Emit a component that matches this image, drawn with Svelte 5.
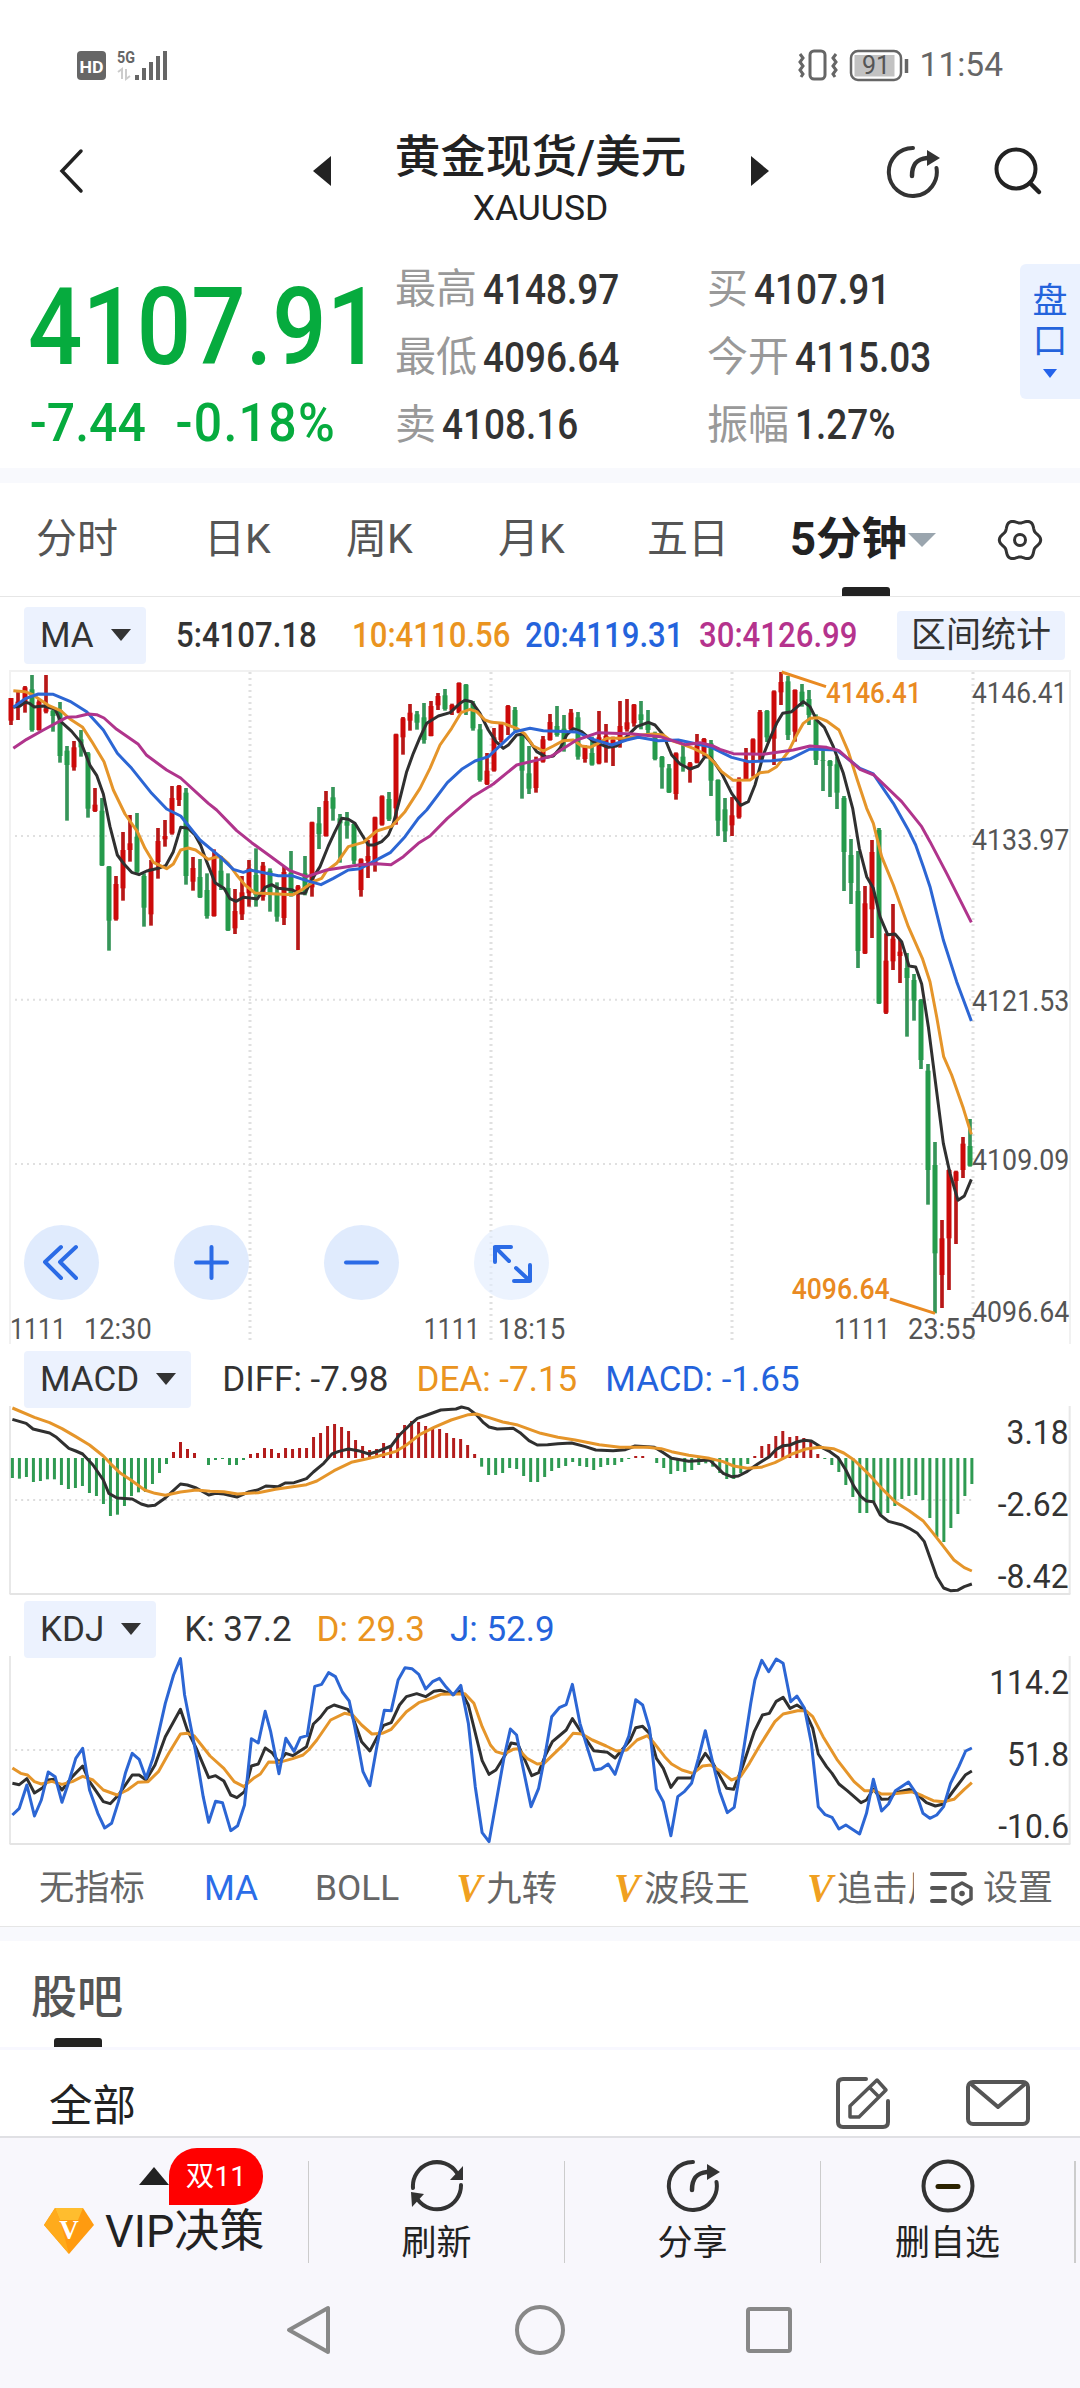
<script lang="ts">
    const stats = [
        ['最高', '4148.97'],
        ['买', '4107.91'],
        ['最低', '4096.64'],
        ['今开', '4115.03'],
        ['卖', '4108.16'],
        ['振幅', '1.27%'],
    ];

    const periods = ['分时', '日K', '周K', '月K', '五日'];

    const averages = [
        { text: '5:4107.18', color: 'dark' },
        { text: '10:4110.56', color: 'orange' },
        { text: '20:4119.31', color: 'blue' },
        { text: '30:4126.99', color: 'purple' },
    ];

    // six-lobed outline of the gear icon
    const gear = Array.from({ length: 72 }, (_, i) => {
        const a = (i * Math.PI) / 36;
        const r = 18.8 + 1.9 * Math.cos(6 * a);
        return `${(23 + r * Math.cos(a)).toFixed(2)},${(22 + r * Math.sin(a)).toFixed(2)}`;
    }).join(' ');

    // direction (1 = up), high, body top, body bottom, low; three units per pixel
    const candles = [
        [1, 114, 114, 182, 195], [1, 92, 125, 140, 180], [1, 78, 82, 128, 158], [0, 45, 88, 210, 215],
        [1, 118, 125, 210, 212], [1, 45, 145, 155, 160], [0, 150, 152, 168, 215], [0, 126, 150, 288, 308],
        [0, 258, 272, 315, 482], [1, 243, 262, 322, 332], [0, 210, 238, 262, 290], [0, 276, 280, 446, 473],
        [1, 384, 434, 453, 456], [0, 414, 452, 616, 618], [0, 618, 620, 782, 872], [1, 648, 672, 778, 782],
        [1, 516, 570, 685, 722], [1, 465, 550, 570, 605], [0, 459, 530, 635, 640], [0, 640, 648, 743, 800],
        [1, 600, 625, 763, 797], [1, 504, 543, 606, 656], [1, 480, 528, 538, 560], [1, 378, 414, 520, 524],
        [1, 375, 378, 420, 438], [0, 384, 398, 648, 674], [1, 591, 624, 665, 692], [0, 597, 651, 712, 714],
        [0, 640, 690, 768, 776], [1, 568, 590, 768, 770], [0, 588, 632, 680, 690], [0, 640, 684, 811, 813],
        [1, 687, 753, 805, 822], [1, 648, 697, 763, 780], [1, 600, 625, 700, 740], [0, 565, 645, 705, 740],
        [1, 606, 617, 710, 722], [0, 625, 632, 705, 755], [0, 667, 698, 770, 785], [1, 620, 636, 774, 795],
        [0, 573, 638, 700, 710], [1, 675, 679, 692, 870], [0, 588, 640, 700, 706], [1, 485, 487, 682, 710],
        [0, 441, 490, 522, 567], [1, 393, 423, 528, 530], [0, 381, 412, 446, 482], [0, 462, 475, 490, 608],
        [0, 456, 485, 497, 536], [0, 490, 492, 602, 612], [1, 595, 598, 690, 710], [1, 540, 588, 603, 654],
        [1, 470, 472, 615, 635], [1, 406, 409, 494, 497], [0, 396, 417, 478, 483], [1, 221, 223, 445, 494],
        [1, 171, 175, 232, 284], [1, 132, 158, 182, 212], [0, 153, 163, 188, 209], [0, 129, 172, 240, 251],
        [1, 123, 138, 228, 229], [1, 99, 108, 136, 150], [0, 87, 106, 147, 152], [1, 131, 135, 152, 165],
        [1, 67, 69, 158, 160], [0, 72, 74, 150, 165], [0, 123, 130, 205, 212], [0, 192, 208, 360, 365],
        [1, 279, 332, 372, 375], [1, 204, 232, 332, 335], [1, 186, 192, 240, 248], [1, 135, 138, 200, 225],
        [0, 141, 150, 200, 212], [0, 220, 225, 332, 416], [0, 258, 340, 386, 402], [1, 290, 300, 384, 398],
        [1, 228, 238, 305, 308], [1, 162, 186, 240, 242], [0, 138, 198, 225, 230], [0, 165, 206, 245, 275],
        [1, 147, 158, 208, 215], [0, 156, 172, 290, 299], [1, 255, 260, 297, 308], [0, 230, 279, 314, 317],
        [1, 153, 232, 310, 313], [1, 192, 228, 262, 308], [1, 230, 240, 258, 318], [1, 123, 198, 240, 263],
        [1, 117, 187, 208, 215], [1, 132, 134, 190, 200], [0, 123, 163, 180, 208], [0, 150, 185, 210, 225],
        [0, 215, 222, 297, 301], [0, 288, 291, 322, 386], [0, 312, 325, 397, 399], [1, 277, 280, 402, 419],
        [0, 250, 290, 318, 335], [1, 306, 310, 330, 368], [1, 222, 256, 308, 310], [1, 234, 237, 280, 290],
        [0, 240, 250, 362, 408], [0, 358, 360, 482, 528], [0, 414, 448, 514, 546], [1, 411, 466, 496, 528],
        [1, 352, 365, 472, 476], [1, 264, 300, 358, 362], [1, 235, 238, 285, 350], [1, 150, 156, 280, 300],
        [0, 150, 153, 232, 246], [1, 91, 94, 236, 315], [1, 36, 66, 97, 135], [0, 48, 64, 225, 240],
        [1, 88, 90, 215, 245], [0, 72, 95, 125, 140], [0, 90, 117, 165, 195], [0, 163, 180, 300, 315],
        [0, 273, 300, 302, 393], [0, 300, 303, 318, 411], [0, 290, 313, 398, 447], [0, 408, 414, 576, 693],
        [0, 537, 585, 669, 732], [0, 573, 693, 873, 924], [1, 678, 730, 880, 882], [1, 540, 576, 748, 834],
        [0, 504, 510, 1030, 1032], [1, 820, 902, 1058, 1062], [1, 732, 836, 904, 930], [1, 840, 875, 888, 969],
        [0, 879, 924, 954, 1130], [0, 942, 960, 1022, 1082], [0, 1017, 1020, 1200, 1227], [0, 1212, 1232, 1530, 1634],
        [0, 1446, 1515, 1780, 1960], [1, 1680, 1735, 1845, 1944], [1, 1528, 1530, 1735, 1890], [1, 1532, 1535, 1563, 1752],
        [1, 1431, 1451, 1530, 1554], [0, 1377, 1458, 1517, 1520],
    ];

    const ma5 =
        '40,142 60,138 75,127 88,130 103,141 130,138 165,147 182,184 215,214 243,248 270,316 290,346 310,402 330,500 352,585 372,612 395,637 417,644 440,633 475,625 498,616 520,575 542,502 565,505 585,525 602,556 620,605 645,668 672,685 690,716 708,724 730,712 772,717 795,682 815,674 835,685 875,689 895,699 915,700 938,655 960,620 985,558 1005,515 1025,475 1045,478 1065,490 1083,520 1105,555 1122,555 1145,545 1165,525 1180,490 1200,415 1220,335 1240,280 1260,232 1280,190 1315,168 1350,158 1380,130 1395,121 1415,125 1440,160 1465,210 1488,245 1510,265 1525,255 1550,225 1570,222 1590,245 1610,275 1640,292 1660,288 1680,265 1700,225 1720,206 1745,215 1780,245 1825,262 1850,258 1880,230 1910,200 1945,187 1965,195 1990,225 2015,285 2040,312 2070,327 2095,318 2115,290 2130,292 2145,310 2165,340 2195,400 2222,436 2245,425 2265,375 2290,285 2310,235 2330,190 2348,160 2375,155 2410,125 2430,140 2450,180 2473,202 2500,260 2530,340 2558,445 2578,565 2600,650 2620,685 2640,770 2663,824 2685,822 2705,845 2727,918 2747,921 2765,972 2785,1100 2810,1295 2830,1450 2850,1540 2874,1621 2893,1608 2914,1558';
    const ma10 =
        '40,92 75,95 98,104 145,136 182,152 210,177 248,202 275,244 312,305 340,390 375,462 412,515 435,565 460,607 500,626 520,612 542,570 565,564 587,570 625,598 645,592 662,590 685,610 710,645 735,675 765,699 880,704 905,690 940,665 965,655 980,632 1010,610 1045,560 1090,547 1130,513 1175,499 1215,455 1260,385 1290,325 1320,255 1355,205 1383,158 1410,148 1430,155 1455,180 1475,187 1510,190 1550,205 1575,222 1600,258 1630,273 1660,258 1690,242 1720,240 1745,258 1770,262 1795,250 1820,235 1880,235 1925,225 1960,222 1990,225 2010,240 2040,250 2080,265 2120,285 2145,310 2165,335 2200,361 2250,360 2280,338 2305,335 2330,320 2365,275 2390,225 2410,190 2430,175 2455,173 2480,183 2517,210 2545,275 2572,360 2600,445 2620,490 2645,590 2680,675 2725,800 2767,895 2790,965 2810,1070 2831,1190 2855,1245 2890,1345 2914,1423';
    const ma20 =
        '40,142 78,115 115,102 160,103 210,124 260,155 310,210 352,280 395,325 455,400 500,447 542,468 600,540 660,590 700,628 730,637 750,630 835,647 875,647 920,662 963,674 1000,655 1045,630 1080,626 1120,605 1172,577 1215,530 1255,475 1280,450 1342,368 1385,328 1425,303 1465,290 1510,248 1545,215 1590,205 1630,212 1730,216 1780,238 1835,255 1880,240 1915,232 1975,242 2035,240 2080,250 2130,260 2160,275 2195,292 2245,305 2315,302 2372,296 2430,267 2510,270 2580,325 2620,342 2680,430 2725,510 2747,555 2770,620 2790,680 2830,840 2870,965 2914,1083';
    const ma30 =
        '40,265 80,238 130,210 200,172 230,170 265,162 290,164 312,174 350,208 415,253 440,286 500,330 542,354 625,430 650,450 710,512 755,548 810,588 870,632 920,650 980,630 1080,614 1130,611 1173,614 1210,590 1255,550 1290,528 1342,475 1415,412 1480,372 1550,315 1620,298 1655,288 1730,240 1795,218 1900,222 1980,230 2055,254 2100,248 2140,258 2160,268 2200,281 2290,283 2380,270 2430,258 2480,262 2517,272 2580,328 2622,345 2705,425 2765,500 2790,545 2840,640 2914,787';

    const zero = 324;
    const step = 10.168;
    const bars = [
        384, 386, 381, 396, 393, 388, 388, 405, 417, 414, 408, 429, 438, 462, 498, 494, 468, 438, 427, 426, 402, 369, 342,
        306, 276, 297, 309, 324, 345, 330, 327, 345, 345, 330, 312, 309, 294, 297, 309, 294, 297, 294, 294, 261, 249, 228,
        222, 231, 243, 270, 288, 300, 297, 279, 285, 249, 225, 213, 216, 228, 231, 237, 249, 264, 267, 285, 312, 350, 375,
        375, 369, 354, 357, 378, 396, 396, 381, 363, 354, 348, 336, 348, 351, 360, 351, 345, 345, 336, 327, 318, 318, 324,
        339, 354, 372, 363, 366, 360, 345, 340, 350, 369, 387, 387, 369, 342, 318, 288, 282, 258, 243, 261, 258, 264, 276,
        312, 327, 345, 366, 405, 441, 489, 489, 456, 494, 489, 468, 447, 438, 435, 450, 504, 561, 576, 534, 492, 438, 402,
    ];

    const diff =
        '18,208 28,214 38,220 48,237 60,243 72,249 82,262 100,295 110,303 120,312 135,345 150,390 158,430 170,444 192,447 205,462 215,468 225,466 240,444 250,425 262,402 272,405 285,414 303,435 313,430 325,432 344,441 362,425 374,420 386,408 404,410 414,399 427,398 445,386 455,366 470,340 482,312 492,304 506,297 520,302 536,312 550,303 568,288 580,255 595,225 606,205 620,195 640,180 662,177 670,171 680,176 692,195 702,218 710,231 722,237 745,235 755,248 768,272 780,285 795,284 810,281 830,279 850,290 865,300 890,302 908,299 922,288 940,290 950,292 962,307 975,325 1000,334 1030,330 1038,345 1050,370 1062,380 1072,378 1085,364 1100,342 1117,320 1127,298 1137,287 1147,285 1157,276 1168,271 1178,273 1190,289 1205,305 1217,323 1228,360 1240,410 1250,440 1258,453 1268,455 1278,495 1290,514 1310,525 1320,535 1332,550 1342,575 1350,622 1360,680 1370,714 1380,722 1390,721 1400,710 1411,702';
    const dea =
        '18,174 50,202 72,218 90,236 110,260 130,285 150,318 160,340 175,370 190,390 210,420 225,430 240,436 262,426 285,420 305,424 325,425 345,432 375,428 400,418 425,410 445,404 460,393 485,362 510,337 530,328 550,318 575,304 590,285 610,253 630,232 655,210 680,194 692,192 710,203 730,216 750,224 785,250 810,262 835,270 870,284 900,292 940,292 960,296 975,305 1000,316 1030,325 1050,335 1065,348 1085,355 1105,352 1125,338 1150,312 1170,297 1190,292 1210,296 1225,309 1240,330 1260,370 1280,415 1300,456 1320,482 1340,512 1355,550 1370,590 1385,630 1400,653 1411,663';

    const kLine =
        '18,550 28,554 39,536 50,579 62,563 70,540 78,538 90,570 105,530 120,498 130,545 150,605 160,611 172,585 192,525 202,525 212,540 225,495 240,410 262,328 272,390 285,445 303,533 313,527 325,543 335,585 344,593 355,575 365,498 375,492 385,444 395,458 405,487 415,460 425,467 445,440 455,372 465,352 475,325 485,315 505,328 512,350 525,425 537,453 548,410 557,376 568,368 580,315 590,290 605,281 618,290 630,274 640,271 658,283 669,272 680,315 700,482 710,523 720,510 735,460 742,429 752,433 762,480 772,527 782,518 792,465 802,425 822,390 831,356 845,400 862,452 882,457 893,474 905,445 915,420 923,383 933,379 943,400 953,475 963,505 974,562 984,534 1004,534 1015,490 1024,460 1035,490 1055,565 1065,568 1078,500 1095,395 1107,345 1117,340 1127,304 1137,292 1147,325 1157,315 1168,330 1180,385 1188,462 1200,500 1208,520 1218,552 1230,572 1250,608 1258,600 1268,567 1280,598 1290,597 1300,578 1320,568 1330,580 1345,608 1358,618 1370,612 1385,570 1402,524 1411,513';
    const dLine =
        '18,504 30,520 40,525 50,545 60,552 75,544 90,553 105,545 120,529 135,540 150,570 170,585 185,570 200,547 215,545 230,515 245,460 262,402 272,400 282,408 305,468 325,505 340,545 354,560 368,535 378,522 390,486 405,487 425,476 440,465 448,450 460,420 480,360 500,340 512,345 525,375 540,402 555,400 568,388 590,335 608,308 625,296 640,283 675,281 688,310 700,380 712,435 720,455 732,462 745,448 752,446 765,475 780,492 790,490 800,470 820,430 832,400 845,402 860,420 880,438 895,453 910,450 925,420 940,407 950,430 965,470 975,492 990,510 1006,520 1020,498 1032,495 1045,512 1062,540 1075,530 1088,490 1105,430 1125,365 1137,342 1158,332 1170,332 1180,350 1195,410 1215,478 1240,545 1255,572 1270,572 1280,582 1295,582 1325,575 1340,588 1355,602 1370,605 1385,598 1400,568 1411,548';
    const jLine =
        '18,645 28,625 39,555 50,648 60,600 70,516 80,530 90,607 100,545 110,475 120,445 130,570 142,640 152,684 162,670 172,605 182,520 192,460 202,478 212,535 222,475 240,310 252,225 262,176 268,285 285,465 295,590 303,667 313,604 323,608 335,692 345,677 355,615 365,416 375,429 385,334 393,395 405,521 415,415 427,454 436,413 446,407 457,259 467,253 477,218 487,230 497,276 507,303 515,380 527,515 537,557 548,430 558,331 568,332 578,240 588,203 598,206 608,223 618,267 628,245 638,235 648,262 658,285 669,256 680,370 690,560 700,698 710,725 720,610 732,470 741,387 750,405 758,490 771,620 782,565 790,480 801,350 812,323 822,314 831,253 842,370 853,445 863,510 873,506 883,492 893,523 903,460 913,408 923,299 933,315 943,385 953,567 963,605 974,707 984,590 994,574 1004,550 1014,475 1024,392 1034,480 1045,575 1056,638 1066,622 1078,470 1090,310 1096,240 1106,181 1116,215 1127,177 1137,190 1148,305 1157,288 1168,325 1178,430 1188,620 1198,644 1208,652 1218,687 1228,675 1248,702 1258,640 1268,538 1280,633 1290,612 1300,572 1319,546 1330,580 1340,640 1350,655 1360,645 1370,620 1380,550 1392,500 1402,453 1411,444';

    const axis = [
        { text: '4146.41', y: 128, w: 282 },
        { text: '4133.97', y: 571, w: 288 },
        { text: '4121.53', y: 1052, w: 288 },
        { text: '4109.09', y: 1531, w: 288 },
        { text: '4096.64', y: 1985, w: 288 },
    ];

    const times = [
        { x: 30, date: '1111', time: '12:30' },
        { x: 1271, date: '1111', time: '18:15' },
        { x: 2502, date: '1111', time: '23:55' },
    ];
</script>

{#snippet share()}
    <svg class="action-icon" viewBox="0 0 54 54">
        <path d="M27 3a24 24 0 1 0 23.500 20" fill="none" stroke="currentColor" stroke-width="4" stroke-linecap="round" />
        <path d="M26 31c0-12 5-17 15-18" fill="none" stroke="currentColor" stroke-width="4.500" stroke-linecap="round" />
        <path d="M41 5l13 8-13 8z" fill="currentColor" />
    </svg>
{/snippet}

{#snippet picker(name: string)}
    <button class="picker">{name}<i></i></button>
{/snippet}

<div class="page">
    <div class="status">
        <svg width="94" height="34" viewBox="0 0 94 34">
            <rect x="1" y="3" width="29" height="29" rx="4" fill="#666" />
            <text x="3.5" y="24.500" class="hd" textLength="24" lengthAdjust="spacingAndGlyphs">HD</text>
            <text x="41" y="14.500" class="net" textLength="18" lengthAdjust="spacingAndGlyphs">5G</text>
            <path d="M42 24l4-3v10M50 21v10l4-3" fill="none" stroke="#ccc" stroke-width="2" />
            <path d="M61 32v-5M68 32v-12M75 32v-18M82 32V8M89 32V3" stroke="#666" stroke-width="4" />
        </svg>
        <div class="status-right">
            <svg width="114" height="36" viewBox="0 0 114 36">
                <g fill="none" stroke="#666">
                    <rect x="13" y="4" width="15" height="28" rx="4" stroke-width="3" />
                    <path d="M3 7l3 4-3 4 3 4-3 4 3 4-2 3M39 7l-3 4 3 4-3 4 3 4-3 4 2 3" stroke-width="3" />
                    <rect x="54" y="4" width="50" height="29" rx="7" stroke-width="2.500" />
                    <path d="M109.500 12v14" stroke-width="3.500" />
                </g>
                <rect x="57.500" y="8" width="40" height="21.500" fill="#c2c2c2" />
                <text x="79" y="27" class="charge">91</text>
            </svg>
            <span>11:54</span>
        </div>
    </div>

    <header>
        <svg class="back" width="26" height="46" viewBox="0 0 26 46">
            <path d="M22 3L3 23l19 20" fill="none" stroke="#222" stroke-width="3.500" stroke-linecap="round" />
        </svg>
        <div class="symbol">
            <svg width="18" height="30" viewBox="0 0 18 30"><path d="M18 0v30L0 15z" fill="#222" /></svg>
            <div class="name">
                <h1>黄金现货/美元</h1>
                <p>XAUUSD</p>
            </div>
            <svg width="18" height="30" viewBox="0 0 18 30"><path d="M0 0v30l18-15z" fill="#222" /></svg>
        </div>
        <div class="tools">
            {@render share()}
            <svg width="52" height="52" viewBox="0 0 52 52">
                <circle cx="23" cy="23" r="19.500" fill="none" stroke="#222" stroke-width="4" />
                <path d="M37 37l9 9" stroke="#222" stroke-width="4.500" stroke-linecap="round" />
            </svg>
        </div>
    </header>

    <section class="quote">
        <div class="price">
            <div class="last">4107.91</div>
            <div class="change"><span>-7.44</span><span class="percent">-0.18%</span></div>
        </div>
        <dl>
            {#each stats as [label, value]}
                <div><dt>{label}</dt><dd>{value}</dd></div>
            {/each}
        </dl>
        <button class="book"><span>盘</span><span>口</span><i></i></button>
    </section>

    <nav class="periods">
        {#each periods as period}
            <span>{period}</span>
        {/each}
        <span class="active">5分钟<i></i></span>
        <svg width="46" height="44" viewBox="0 0 46 44">
            <polygon points={gear} fill="none" stroke="#333" stroke-width="3" stroke-linejoin="round" />
            <circle cx="23" cy="22" r="5.500" fill="none" stroke="#333" stroke-width="3" />
        </svg>
    </nav>

    <div class="legend ma">
        {@render picker('MA')}
        <div class="averages">
            {#each averages as { text, color }}
                <span class={color}>{text}</span>
            {/each}
        </div>
        <button class="range">区间统计</button>
    </div>

    <div class="chart">
        <svg width="1080" height="684" viewBox="0 18 3240 2052">
            <path class="frame" d="M30 2052V33H3210V2052" />
            <g class="grid">
                <path d="M750 36V2052M1473 36V2052M2196 36V2052M2919 36V2052" />
                <path d="M45 528H2919M45 1019H2919M45 1512H2919" />
            </g>
            {#each candles as [up, high, top, bottom, low], i}
                <g class={up ? 'up' : 'down'}>
                    <rect class="wick" x={33 + 21 * i - 5.5} y={high} width="11" height={low - high} />
                    <rect x={33 + 21 * i - 7.5} y={top} width="15" height={bottom - top} />
                </g>
            {/each}
            <g class="curve">
                <polyline points={ma5} stroke="#303030" />
                <polyline points={ma10} stroke="#e5952a" />
                <polyline points={ma20} stroke="#2c66d4" />
                <polyline points={ma30} stroke="#b0348c" />
                <path d="M2345 36L2478 80M2670 1917L2805 1960" stroke="#e98a22" />
            </g>
            <g class="extreme">
                <text x="2478" y="128" textLength="286" lengthAdjust="spacingAndGlyphs">4146.41</text>
                <text x="2375" y="1916" textLength="294" lengthAdjust="spacingAndGlyphs">4096.64</text>
            </g>
            <g class="ticks">
                {#each axis as { text, y, w }}
                    <text x="2916" {y} textLength={w + 4} lengthAdjust="spacingAndGlyphs">{text}</text>
                {/each}
                {#each times as { x, date, time }}
                    <text {x} y="2037" textLength="168" lengthAdjust="spacingAndGlyphs">{date}</text>
                    <text x={x + 222} y="2037" textLength="203" lengthAdjust="spacingAndGlyphs">{time}</text>
                {/each}
            </g>
        </svg>
        <div class="controls">
            <button aria-label="后退">
                <svg viewBox="0 0 75 75"><path d="M37 22L21 37l16 16M52 22L36 37l16 16" /></svg>
            </button>
            <button aria-label="放大">
                <svg viewBox="0 0 75 75"><path d="M37.500 22v31M22 37.500h31" /></svg>
            </button>
            <button aria-label="缩小">
                <svg viewBox="0 0 75 75"><path d="M22 37.500h31" /></svg>
            </button>
            <button aria-label="全屏" class="expand">
                <svg viewBox="0 0 75 75"><path d="M21 37V22h16M21 22l14 14M56 40v16H40M56 56L42 43" /></svg>
            </button>
        </div>
    </div>

    <div class="legend">
        {@render picker('MACD')}
        <span>DIFF: -7.98</span>
        <span class="orange">DEA: -7.15</span>
        <span class="blue">MACD: -1.65</span>
    </div>
    <div class="sub">
        <svg viewBox="0 174 1568 570" preserveAspectRatio="none">
            <path class="side" d="M14.500 168V732M1553 168V732" />
            <path class="base" d="M14 732H1554" />
            <path class="dots" d="M22 450H1411" />
            {#each bars as y, i}
                <path class={y < zero ? 'bar rise' : 'bar fall'} d="M{18 + step * i} {zero}V{y}" />
            {/each}
            <polyline class="line" points={diff} stroke="#303030" />
            <polyline class="line" points={dea} stroke="#e5952a" />
        </svg>
        <div class="scale"><span>3.18</span><span>-2.62</span><span>-8.42</span></div>
    </div>

    <div class="legend kdj">
        {@render picker('KDJ')}
        <span>K: 37.2</span>
        <span class="orange">D: 29.3</span>
        <span class="blue">J: 52.9</span>
    </div>
    <div class="sub">
        <svg viewBox="0 174 1568 570" preserveAspectRatio="none">
            <path class="side" d="M14.500 168V732M1553 168V732" />
            <path class="base" d="M14 732H1554" />
            <path class="dots" d="M22 450H1411" />
            <polyline class="line" points={kLine} stroke="#303030" />
            <polyline class="line" points={dLine} stroke="#e5952a" />
            <polyline class="line" points={jLine} stroke="#2c66d4" />
        </svg>
        <div class="scale"><span>114.2</span><span>51.8</span><span>-10.6</span></div>
    </div>

    <div class="indicators">
        <div class="scroller">
            <span>无指标</span>
            <span class="selected">MA</span>
            <span>BOLL</span>
            <span><b>V</b>九转</span>
            <span><b>V</b>波段王</span>
            <span><b>V</b>追击风</span>
        </div>
        <div class="settings">
            <svg width="46" height="36" viewBox="0 0 46 36">
                <path d="M3 4h33M3 18h13M3 31h13" stroke="#555" stroke-width="4" stroke-linecap="round" />
                <path d="M33 13l9 5v11l-9 5-9-5V18z" fill="none" stroke="#555" stroke-width="3.500" stroke-linejoin="round" />
                <circle cx="33" cy="23.500" r="2.800" fill="#555" />
            </svg>
            设置
        </div>
    </div>

    <section class="forum">
        <h2>股吧</h2>
    </section>
    <div class="posts">
        <span>全部</span>
        <svg width="56" height="56" viewBox="0 0 56 56" fill="none" stroke="#555" stroke-width="4" stroke-linejoin="round">
            <path d="M31 4H8q-5 0-5 5v38q0 5 5 5h40q5 0 5-5V26" stroke-linecap="round" />
            <path d="M42 5l9 10-27 27H15V31zM35 13l9 9" stroke-width="3.500" />
        </svg>
        <svg width="68" height="50" viewBox="0 0 68 50" fill="none" stroke="#555" stroke-width="4" stroke-linejoin="round">
            <rect x="4" y="4" width="60" height="42" rx="5" />
            <path d="M7 6l27 23L61 6" />
        </svg>
    </div>

    <footer>
        <div class="vip">
            <div class="promo"><i></i><em>双11</em></div>
            <div class="vip-name">
                <svg width="50" height="48" viewBox="0 0 50 48">
                    <path d="M11 1h28l11 17-25 29L0 18z" fill="#ff9b10" />
                    <path d="M11 1h28l-5 12H16z" fill="#ffbd2e" />
                    <path d="M0 18L11 1l5 12 9 34z" fill="#ffab1c" />
                    <text x="25" y="32" class="gem">V</text>
                </svg>
                VIP决策
            </div>
        </div>
        <div class="action">
            <svg class="action-icon" viewBox="0 0 54 54">
                <path d="M3 29A24 24 0 0 1 47 14M51 26A24 24 0 0 1 8 41" fill="none" stroke="currentColor" stroke-width="4" stroke-linecap="round" />
                <path d="M53 7v14H40zM1 33l13 2-12 13z" fill="currentColor" />
            </svg>
            刷新
        </div>
        <div class="action">
            {@render share()}
            分享
        </div>
        <div class="action">
            <svg class="action-icon" viewBox="0 0 54 54">
                <circle cx="27" cy="27" r="24.500" fill="none" stroke="currentColor" stroke-width="4" />
                <path d="M17 27.500h20" stroke="#2b2200" stroke-width="5" stroke-linecap="round" />
            </svg>
            删自选
        </div>
    </footer>

    <div class="system">
        <svg width="510" height="56" viewBox="0 0 510 56" fill="none" stroke="#888" stroke-width="4" stroke-linejoin="round">
            <path d="M45 6v44L6 28z" />
            <circle cx="257" cy="28" r="23" />
            <rect x="465" y="7" width="42" height="42" rx="2" />
        </svg>
    </div>
</div>

<style>
    :global(body) {
        background: #fff;
    }
    .page {
        width: 1080px;
        height: 2388px;
        overflow: hidden;
        display: flex;
        flex-direction: column;
        color: #333;
        font-family: Roboto, 'Noto Sans CJK SC', sans-serif;
        font-size: 35px;
        line-height: 1;
    }
    .page > * {
        flex: none;
        box-sizing: border-box;
    }
    svg {
        display: block;
        flex: none;
    }
    button {
        padding: 0;
        border: 0;
        color: inherit;
        font: inherit;
    }
    .orange {
        color: #ea9420;
    }
    .blue {
        color: #2463dc;
    }
    .purple {
        color: #b5338d;
    }

    .status {
        height: 112px;
        padding: 18px 77px 0 76px;
        display: flex;
        justify-content: space-between;
        align-items: center;
        color: #666;
        font-size: 33.500px;
    }
    .status-right {
        display: flex;
        align-items: center;
        gap: 9px;
    }
    .hd {
        fill: #fff;
        font-size: 17px;
        font-weight: 700;
    }
    .net {
        fill: #666;
        font-size: 17px;
        font-weight: 700;
    }
    .charge {
        fill: #555;
        font-size: 25px;
        text-anchor: middle;
    }

    header {
        height: 124px;
        padding: 0 35px 0 59px;
        display: flex;
        align-items: center;
        justify-content: space-between;
        color: #222;
    }
    .back {
        margin-top: -7px;
        margin-right: 110px;
    }
    .symbol {
        display: flex;
        align-items: center;
        gap: 65px;
        margin-top: -6px;
    }
    .name {
        display: flex;
        flex-direction: column;
        align-items: center;
        padding-top: 20px;
    }
    h1,
    h2,
    p,
    dl,
    dd {
        margin: 0;
    }
    h1 {
        width: 290px;
        display: flex;
        justify-content: center;
        white-space: nowrap;
        font-size: 45.600px;
        line-height: 54px;
        font-weight: 500;
    }
    p {
        font-size: 35.500px;
        line-height: 46px;
    }
    .tools {
        display: flex;
        align-items: center;
        gap: 53px;
        margin-top: -4px;
    }
    .action-icon {
        width: 54px;
        height: 54px;
        color: #333;
    }

    .quote {
        height: 247px;
        border-bottom: 15px solid #f8f9fd;
        display: flex;
    }
    .price {
        width: 395px;
        padding: 38px 0 0 28px;
        box-sizing: border-box;
        color: #06ab3e;
        font-weight: 500;
    }
    .last {
        font-size: 107px;
        line-height: 107px;
        transform: scaleX(0.895);
        transform-origin: left;
    }
    .change {
        display: flex;
        gap: 32px;
        padding: 15px 0 0 2px;
        font-size: 54px;
        line-height: 54px;
        transform: scaleX(0.925);
        transform-origin: left;
    }
    .percent {
        letter-spacing: 1.400px;
    }
    dl {
        width: 625px;
        padding-top: 20px;
        display: grid;
        grid-template-columns: 312px 1fr;
        grid-auto-rows: 67.700px;
    }
    dl div {
        display: flex;
        align-items: center;
        gap: 6px;
    }
    dt {
        color: #999;
        font-size: 41px;
        font-weight: 400;
    }
    dd {
        font-size: 42px;
        font-weight: 500;
        transform: scaleX(0.88);
        transform-origin: left;
    }
    .book {
        width: 60px;
        height: 135px;
        margin-top: 28px;
        padding-top: 18px;
        box-sizing: border-box;
        border-radius: 6px 0 0 6px;
        background: #ebf2ff;
        color: #2463dc;
        display: flex;
        flex-direction: column;
        align-items: center;
        font-size: 35px;
        line-height: 40px;
    }
    .book i {
        margin-top: 7px;
        border: 7px solid transparent;
        border-top: 9px solid #2463eb;
        border-bottom: 0;
    }

    .periods {
        height: 114px;
        padding: 0 36px 0 36px;
        border-bottom: 1px solid #e6e6e6;
        display: grid;
        grid-template-columns: 168px 142px 152px 149px 143px 207px 46px;
        align-items: center;
        color: #555;
        font-size: 41px;
    }
    .periods span {
        white-space: nowrap;
    }
    .periods .active {
        position: relative;
        display: flex;
        align-items: center;
        color: #222;
        font-size: 45.500px;
        font-weight: 700;
    }
    .active i {
        border: 14px solid transparent;
        border-top-color: #9aa5ae;
        border-bottom: 0;
        margin-left: 1px;
    }
    .active::after {
        content: '';
        position: absolute;
        left: 52px;
        bottom: -34px;
        width: 48px;
        height: 9px;
        border-radius: 3px 3px 0 0;
        background: #222;
    }

    .legend {
        height: 58px;
        padding-left: 24px;
        display: flex;
        align-items: center;
        gap: 28px;
    }
    .legend span {
        white-space: nowrap;
        font-size: 35px;
    }
    .kdj {
        gap: 25px;
    }
    .ma {
        height: 69px;
        gap: 0;
        padding: 7px 15px 0 24px;
    }
    .picker {
        height: 57px;
        margin-right: 3px;
        padding: 0 15px 0 16px;
        border-radius: 4px;
        background: #ecf2fe;
        display: flex;
        align-items: center;
        gap: 17px;
    }
    .picker i {
        border: 10.500px solid transparent;
        border-top: 12px solid #333;
        border-bottom: 0;
    }
    .averages {
        flex: 1;
        padding-left: 27px;
        display: grid;
        grid-template-columns: 176px 173px 174px 1fr;
    }
    .averages span {
        font-weight: 500;
        transform: scaleX(0.89);
        transform-origin: left;
    }
    .range {
        width: 168px;
        height: 49px;
        border-radius: 4px;
        background: #ecf2fe;
        white-space: nowrap;
    }

    .chart {
        position: relative;
        height: 684px;
    }
    .frame {
        fill: none;
        stroke: #f1f1f1;
        stroke-width: 6;
    }
    .grid {
        stroke: #e0e0e0;
        stroke-width: 9;
        stroke-dasharray: 6 12;
        fill: none;
    }
    .grid path:last-child {
        stroke-width: 6;
    }
    .up {
        fill: #cc0a0a;
    }
    .up .wick {
        fill: #b81818;
    }
    .down {
        fill: #259a4b;
    }
    .down .wick {
        fill: #369559;
    }
    .curve {
        fill: none;
        stroke-width: 9;
        stroke-linejoin: round;
    }
    .extreme {
        fill: #e98a22;
        font-size: 87px;
        font-weight: 500;
    }
    .ticks {
        fill: #555;
        font-size: 87px;
    }
    .controls {
        position: absolute;
        left: 24px;
        top: 559px;
        display: flex;
        gap: 75px;
    }
    .controls button {
        width: 75px;
        height: 75px;
        border-radius: 50%;
        background: rgba(218, 231, 253, 0.85);
    }
    .controls .expand {
        background: rgba(226, 236, 254, 0.65);
    }
    .controls path {
        fill: none;
        stroke: #2b6be6;
        stroke-width: 4;
        stroke-linecap: round;
        stroke-linejoin: round;
    }

    .sub {
        position: relative;
        height: 192px;
    }
    .sub svg {
        width: 1080px;
        height: 190px;
        overflow: visible;
    }
    .sub path,
    .sub polyline {
        fill: none;
        vector-effect: non-scaling-stroke;
    }
    .side {
        stroke: #e8e8e8;
        stroke-width: 2;
    }
    .base {
        stroke: #e4e4e4;
        stroke-width: 2;
    }
    .dots {
        stroke: #ddd;
        stroke-width: 2;
        stroke-dasharray: 2 4;
    }
    .bar {
        stroke-width: 3;
    }
    .rise {
        stroke: #b31c1c;
    }
    .fall {
        stroke: #2f9a52;
    }
    .line {
        stroke-width: 3;
        stroke-linejoin: round;
    }
    .scale {
        position: absolute;
        top: -11px;
        right: 11px;
        display: flex;
        flex-direction: column;
        align-items: flex-end;
        font-size: 33.500px;
        line-height: 72px;
        transform: scaleX(0.95);
        transform-origin: right;
    }

    .indicators {
        height: 77px;
        border-bottom: 1px solid #e6e6e6;
        display: flex;
        align-items: center;
        color: #666;
    }
    .scroller {
        width: 914px;
        padding-left: 39px;
        box-sizing: border-box;
        overflow: hidden;
        display: flex;
        gap: 57px;
        white-space: nowrap;
        font-size: 35.300px;
        line-height: 50px;
    }
    .scroller span {
        flex: none;
    }
    .scroller b {
        display: inline-block;
        width: 30px;
        color: #f0a020;
        font-family: 'Liberation Serif', serif;
        font-style: italic;
        font-size: 39px;
    }
    .scroller .selected {
        padding-left: 2px;
        color: #2b6de8;
    }
    .settings {
        padding-left: 15px;
        display: flex;
        align-items: center;
        gap: 8px;
    }

    .forum {
        height: 123px;
        border-top: 14px solid #f8f9fd;
        border-bottom: 3px solid #f8f8ff;
        padding-left: 31px;
        display: flex;
    }
    h2 {
        position: relative;
        color: #555;
        font-size: 46px;
        font-weight: 500;
        line-height: 112px;
    }
    h2::after {
        content: '';
        position: absolute;
        left: 23px;
        bottom: 0;
        width: 48px;
        height: 9px;
        border-radius: 3px 3px 0 0;
        background: #222;
    }
    .posts {
        height: 88px;
        padding: 20px 48px 0 49px;
        border-bottom: 2px solid #e0e0e4;
        display: flex;
        align-items: center;
        gap: 73px;
        color: #222;
        font-size: 43.500px;
    }
    .posts span {
        flex: 1;
        padding-top: 8px;
    }

    footer {
        height: 144px;
        padding-top: 8px;
        background: #f8f7fc;
        display: flex;
        color: #222;
    }
    .vip {
        width: 308px;
        box-sizing: border-box;
    }
    .promo {
        padding-left: 139px;
        display: flex;
        align-items: center;
        height: 57px;
        margin-top: 2px;
    }
    .promo i {
        border: 15px solid transparent;
        border-bottom: 18px solid #222;
        border-top: 0;
        margin-top: -2px;
    }
    .promo em {
        width: 94px;
        height: 57px;
        border-radius: 28px 28px 28px 0;
        background: #f00;
        color: #fff;
        font-size: 28.500px;
        font-style: normal;
        line-height: 58px;
        text-align: center;
    }
    .vip-name {
        padding-left: 44px;
        display: flex;
        align-items: center;
        gap: 11px;
        height: 52px;
        font-size: 45px;
        white-space: nowrap;
    }
    .gem {
        fill: #fff;
        font-family: 'Liberation Serif', serif;
        font-size: 27px;
        font-weight: 700;
        text-anchor: middle;
    }
    .action {
        width: 256px;
        height: 102px;
        margin-top: 15px;
        border-left: 1px solid #ccc;
        box-sizing: border-box;
        display: flex;
        flex-direction: column;
        align-items: center;
        gap: 13px;
    }
    .action .action-icon {
        margin-top: -2px;
    }
    .action:last-child {
        border-right: 2px solid #ccc;
    }
    .system {
        flex: 1;
        padding: 20px 0 0 283px;
        background: #f8f7fc;
    }
</style>
